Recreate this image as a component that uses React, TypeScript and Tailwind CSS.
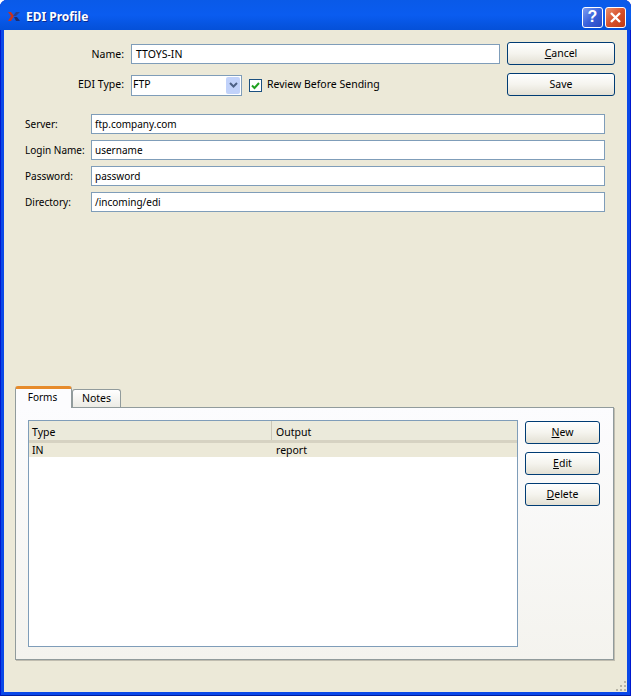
const fieldFont = { fontFamily: '"Noto Sans", "DejaVu Sans", sans-serif' };

const LogoIcon = () => (
  <svg width="14" height="12" viewBox="0 0 14 12" className="ml-[7px]">
    <path d="M1 1h3l3 4-3 5H1l3-5z" fill="#c8321e" />
    <path d="M6 5l3-4h4L9 5z" fill="#2a3f8f" />
    <path d="M7 6h3l3 4H9z" fill="#1c2c70" />
  </svg>
);

const TitleButton = ({ kind }: { kind: 'help' | 'close' }) => (
  <div
    className={
      kind === 'help'
        ? 'w-[21px] h-[21px] rounded-[3px] border border-white flex items-center justify-center bg-gradient-to-br from-[#7f9df0] via-[#3a62dc] to-[#2a46c0]'
        : 'w-[21px] h-[21px] rounded-[3px] border border-white flex items-center justify-center bg-gradient-to-br from-[#e8906c] via-[#d8502a] to-[#c03a12]'
    }
  >
    {kind === 'help' ? (
      <span className="text-white font-bold text-[16px] leading-none font-['Liberation_Sans']">?</span>
    ) : (
      <svg width="13" height="13" viewBox="0 0 13 13">
        <path d="M2 2l9 9M11 2l-9 9" stroke="#fff" strokeWidth="2.4" />
      </svg>
    )}
  </div>
);

const Input = ({ value, className }: { value: string; className: string }) => (
  <div className={`h-5 bg-white border border-[#7f9db9] flex items-center pl-1 pt-px text-black ${className}`}>
    {value}
  </div>
);

const Button = ({ label, mnemonic, className }: { label: string; mnemonic?: number; className: string }) => (
  <div
    className={`rounded-[3px] border border-[#003c74] bg-gradient-to-b from-white via-[#f5f4ee] to-[#e3e0d4] flex items-center justify-center text-[10.5px] text-black ${className}`}
  >
    {mnemonic === undefined ? (
      label
    ) : (
      <span>
        {label.slice(0, mnemonic)}
        <span className="underline">{label[mnemonic]}</span>
        {label.slice(mnemonic + 1)}
      </span>
    )}
  </div>
);

const fields = [
  ['Server:', 'ftp.company.com'],
  ['Login Name:', 'username'],
  ['Password:', 'password'],
  ['Directory:', '/incoming/edi'],
];

export default function App() {
  return (
    <div
      style={fieldFont}
      className="w-[631px] h-[696px] flex flex-col bg-[#0a48e8] rounded-t-[7px] overflow-hidden text-[10.5px] text-black shadow-[inset_1px_0_0_#0019cf,inset_-1px_0_0_#0019cf,inset_0_-1px_0_#001ea0]"
    >
      {/* title bar */}
      <div className="h-[30px] shrink-0 flex items-center pt-1 bg-gradient-to-b from-[#0a5ae8] via-[#0a5cf0] to-[#0450d8]">
        <LogoIcon />
        <span className="ml-[5px] text-white font-bold text-[12px] [text-shadow:1px_1px_0_#0a2a90]">EDI Profile</span>
        <div className="ml-auto mr-[5px] flex gap-[2px]">
          <TitleButton kind="help" />
          <TitleButton kind="close" />
        </div>
      </div>

      {/* client area */}
      <div className="relative flex-1 mx-1 mb-1 bg-[#ece9d8] flex flex-col">
        <div className="flex pt-3">
          <div className="w-[120px] flex flex-col items-end pt-[2px] gap-[11px]">
            <div className="h-5 flex items-center pt-px">Name:</div>
            <div className="h-5 flex items-center">EDI Type:</div>
          </div>
          <div className="ml-[7px] w-[369px] flex flex-col pt-[2px] gap-[11px]">
            <Input value="TTOYS-IN" className="w-full" />
            <div className="flex items-center h-5">
              <div className="w-[111px] h-[21px] bg-white border border-[#7f9db9] flex items-center pl-[1px] pr-[1px] justify-between">
                <span>FTP</span>
                <div className="w-[14px] h-[17px] rounded-[2px] bg-[#c1d2fa] flex items-center justify-center">
                  <svg width="9" height="7" viewBox="0 0 9 7">
                    <path d="M1 1l3.5 3.5L8 1" stroke="#4d6185" strokeWidth="2" fill="none" />
                  </svg>
                </div>
              </div>
              <div className="ml-[7px] w-[13px] h-[13px] bg-white border border-[#1c5180] flex items-center justify-center">
                <svg width="9" height="9" viewBox="0 0 9 9">
                  <path d="M1 4.5l2.5 2.5L8 2" stroke="#21a121" strokeWidth="2" fill="none" />
                </svg>
              </div>
              <span className="ml-[5px]">Review Before Sending</span>
            </div>
          </div>
          <div className="ml-[7px] flex flex-col gap-2">
            <Button label="Cancel" mnemonic={0} className="w-[108px] h-[23px] pt-px" />
            <Button label="Save" className="w-[108px] h-[23px]" />
          </div>
        </div>

        <div className="mt-[18px] flex flex-col gap-[6px] text-[10px]">
          {fields.map(([label, value]) => (
            <div key={label} className="flex items-center h-5">
              <span className="ml-[21px] w-[66px] pt-px">{label}</span>
              <Input value={value} className="w-[514px] pl-[3px]" />
            </div>
          ))}
        </div>

        {/* tabs */}
        <div className="mt-auto ml-[11px] mb-[32px]">
          <div className="flex items-end h-[21px]">
            <div className="w-[57px] h-[22px] -mb-px z-10 rounded-t-[3px] border-x border-[#919b9c] border-t-[3px] border-t-[#e68b2c] bg-[#fcfcfe] flex items-center justify-center pb-[3px] pr-[2px] text-[10px]">
              Forms
            </div>
            <div className="w-[49px] h-[18px] rounded-t-[3px] border-x border-t border-[#919b9c] bg-gradient-to-b from-white to-[#ecebe5] flex items-center justify-center">
              Notes
            </div>
          </div>
          <div className="w-[599px] h-[253px] border border-[#919b9c] shadow-[1px_1px_0_#c0bdb0] bg-gradient-to-b from-[#fcfcfe] to-[#f4f3ee] flex pl-3 pt-3 pr-[14px]">
            <div className="w-[490px] h-[227px] border border-[#7f9db9] bg-white flex flex-col">
              <div className="h-[22px] flex bg-[#ebeadb] border-b-[3px] border-[#d6d2c2]">
                <div className="w-[243px] flex items-center pl-[3px] pt-[4px] border-r border-[#cbc7b8]">Type</div>
                <div className="w-[245px] flex items-center pl-[4px] pt-[4px]">Output</div>
              </div>
              <div className="h-[14px] flex bg-[#ece9d8] pt-px">
                <div className="w-[247px] flex items-center pl-[3px]">IN</div>
                <div className="flex items-center">report</div>
              </div>
            </div>
            <div className="ml-[7px] mt-px flex flex-col gap-2">
              <Button label="New" mnemonic={0} className="w-[75px] h-[23px] pt-px" />
              <Button label="Edit" mnemonic={0} className="w-[75px] h-[23px]" />
              <Button label="Delete" mnemonic={0} className="w-[75px] h-[23px]" />
            </div>
          </div>
        </div>

        {/* resize grip */}
        <svg width="11" height="11" viewBox="0 0 11 11" className="absolute right-0 bottom-0">
          <path d="M8 0h2v2H8zM4 4h2v2H4zM8 4h2v2H8zM0 8h2v2H0zM4 8h2v2H4zM8 8h2v2H8z" fill="#b8b5a6" />
        </svg>
      </div>
    </div>
  );
}
